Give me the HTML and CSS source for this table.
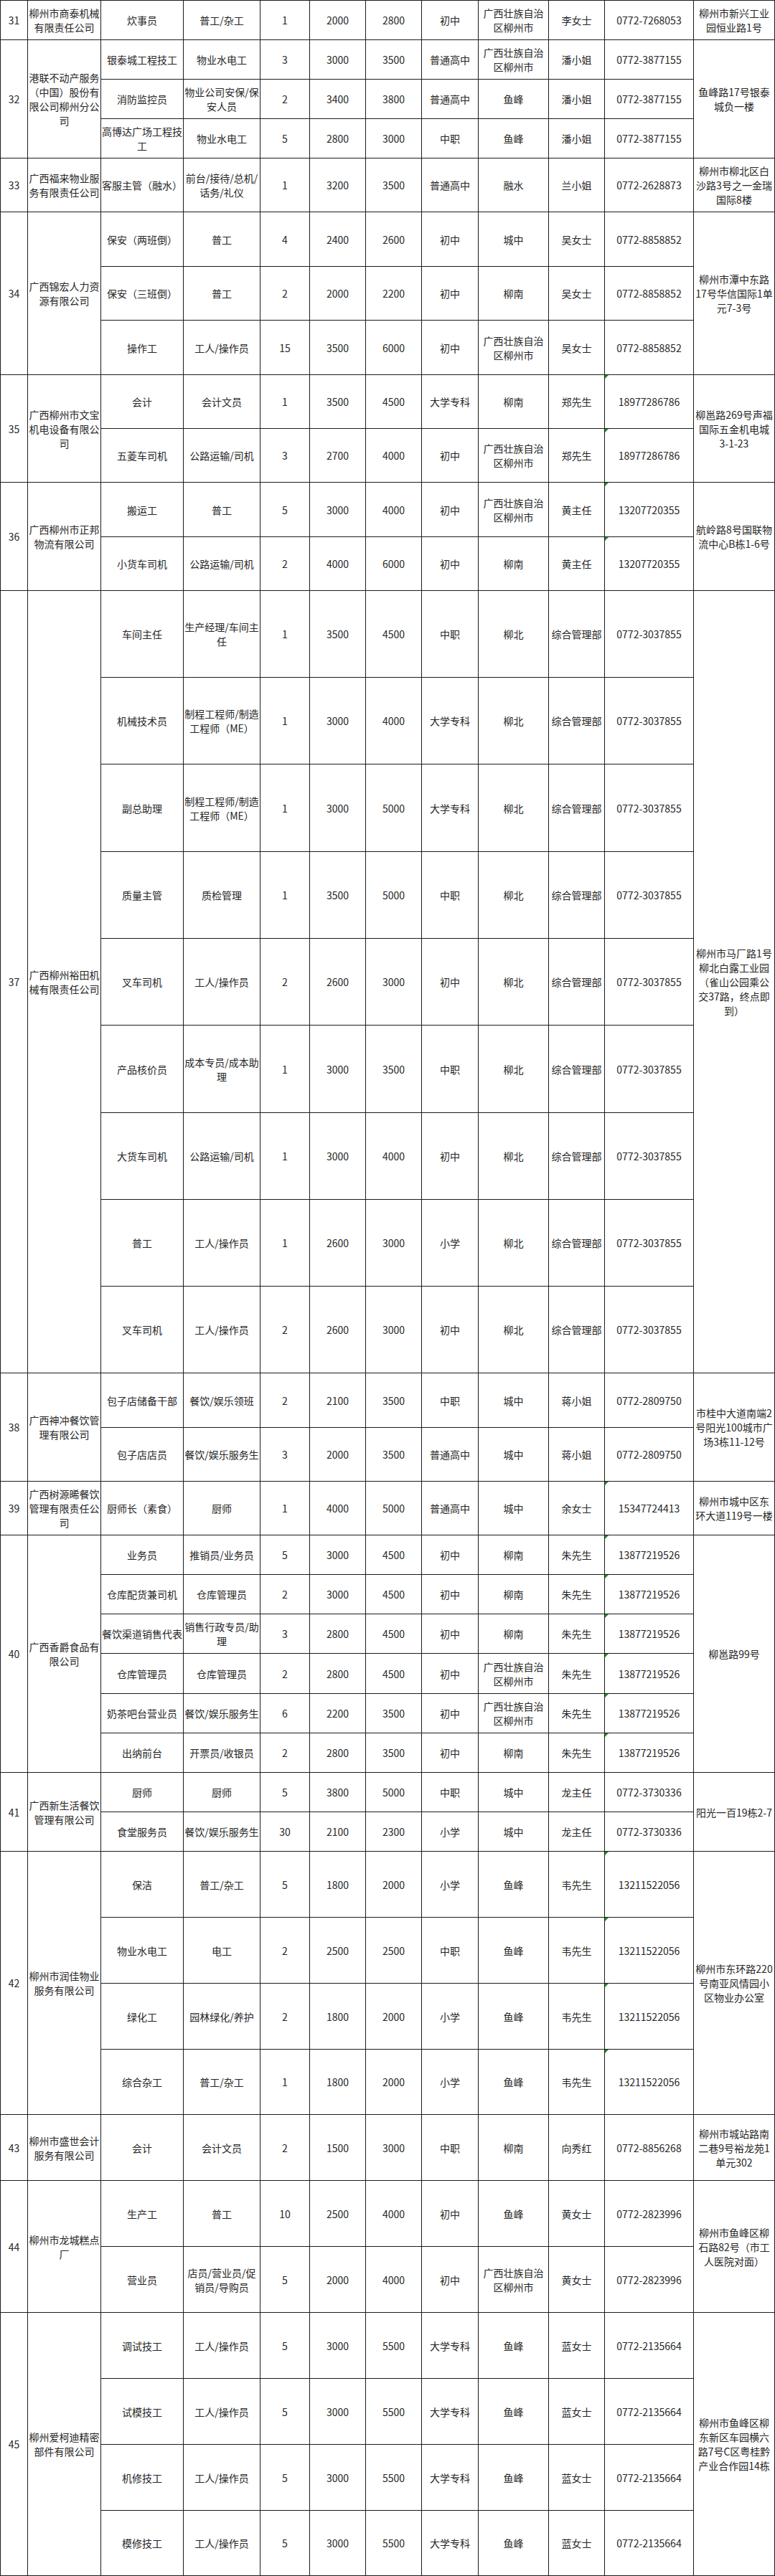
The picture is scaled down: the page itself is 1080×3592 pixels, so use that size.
FILE: index.html
```html
<!DOCTYPE html>
<html lang="zh-CN">
<head>
<meta charset="utf-8">
<title>招聘岗位信息表</title>
<link rel="stylesheet" href="styles.css">
</head>
<body>
<div class="sheet">
<!-- 31 -->
<div class="c">31</div><div class="c"><span>柳州市商泰机械<br>有限责任公司</span></div><div class="c">炊事员</div><div class="c">普工/杂工</div><div class="c">1</div><div class="c">2000</div><div class="c">2800</div><div class="c">初中</div><div class="c"><span>广西壮族自治<br>区柳州市</span></div><div class="c">李女士</div><div class="c">0772-7268053</div><div class="c"><span>柳州市新兴工业<br>园恒业路1号</span></div>
<!-- 32 -->
<div class="c r3">32</div><div class="c r3"><span>港联不动产服务<br>（中国）股份有<br>限公司柳州分公<br>司</span></div><div class="c">银泰城工程技工</div><div class="c">物业水电工</div><div class="c">3</div><div class="c">3000</div><div class="c">3500</div><div class="c">普通高中</div><div class="c"><span>广西壮族自治<br>区柳州市</span></div><div class="c">潘小姐</div><div class="c">0772-3877155</div><div class="c r3"><span>鱼峰路17号银泰<br>城负一楼</span></div>
<div class="c">消防监控员</div><div class="c"><span>物业公司安保/保<br>安人员</span></div><div class="c">2</div><div class="c">3400</div><div class="c">3800</div><div class="c">普通高中</div><div class="c">鱼峰</div><div class="c">潘小姐</div><div class="c">0772-3877155</div>
<div class="c"><span>高博达广场工程技<br>工</span></div><div class="c">物业水电工</div><div class="c">5</div><div class="c">2800</div><div class="c">3000</div><div class="c">中职</div><div class="c">鱼峰</div><div class="c">潘小姐</div><div class="c">0772-3877155</div>
<!-- 33 -->
<div class="c">33</div><div class="c"><span>广西福来物业服<br>务有限责任公司</span></div><div class="c">客服主管（融水）</div><div class="c"><span>前台/接待/总机/<br>话务/礼仪</span></div><div class="c">1</div><div class="c">3200</div><div class="c">3500</div><div class="c">普通高中</div><div class="c">融水</div><div class="c">兰小姐</div><div class="c">0772-2628873</div><div class="c"><span>柳州市柳北区白<br>沙路3号之一金瑞<br>国际8楼</span></div>
<!-- 34 -->
<div class="c r3">34</div><div class="c r3"><span>广西锦宏人力资<br>源有限公司</span></div><div class="c">保安（两班倒）</div><div class="c">普工</div><div class="c">4</div><div class="c">2400</div><div class="c">2600</div><div class="c">初中</div><div class="c">城中</div><div class="c">吴女士</div><div class="c">0772-8858852</div><div class="c r3"><span>柳州市潭中东路<br>17号华信国际1单<br>元7-3号</span></div>
<div class="c">保安（三班倒）</div><div class="c">普工</div><div class="c">2</div><div class="c">2000</div><div class="c">2200</div><div class="c">初中</div><div class="c">柳南</div><div class="c">吴女士</div><div class="c">0772-8858852</div>
<div class="c">操作工</div><div class="c">工人/操作员</div><div class="c">15</div><div class="c">3500</div><div class="c">6000</div><div class="c">初中</div><div class="c"><span>广西壮族自治<br>区柳州市</span></div><div class="c">吴女士</div><div class="c">0772-8858852</div>
<!-- 35 -->
<div class="c r2">35</div><div class="c r2"><span>广西柳州市文宝<br>机电设备有限公<br>司</span></div><div class="c">会计</div><div class="c">会计文员</div><div class="c">1</div><div class="c">3500</div><div class="c">4500</div><div class="c">大学专科</div><div class="c">柳南</div><div class="c">郑先生</div><div class="c flag">18977286786</div><div class="c r2"><span>柳邕路269号声福<br>国际五金机电城<br>3-1-23</span></div>
<div class="c">五菱车司机</div><div class="c">公路运输/司机</div><div class="c">3</div><div class="c">2700</div><div class="c">4000</div><div class="c">初中</div><div class="c"><span>广西壮族自治<br>区柳州市</span></div><div class="c">郑先生</div><div class="c flag">18977286786</div>
<!-- 36 -->
<div class="c r2">36</div><div class="c r2"><span>广西柳州市正邦<br>物流有限公司</span></div><div class="c">搬运工</div><div class="c">普工</div><div class="c">5</div><div class="c">3000</div><div class="c">4000</div><div class="c">初中</div><div class="c"><span>广西壮族自治<br>区柳州市</span></div><div class="c">黄主任</div><div class="c flag">13207720355</div><div class="c r2"><span>航岭路8号国联物<br>流中心B栋1-6号</span></div>
<div class="c">小货车司机</div><div class="c">公路运输/司机</div><div class="c">2</div><div class="c">4000</div><div class="c">6000</div><div class="c">初中</div><div class="c">柳南</div><div class="c">黄主任</div><div class="c flag">13207720355</div>
<!-- 37 -->
<div class="c r9">37</div><div class="c r9"><span>广西柳州裕田机<br>械有限责任公司</span></div><div class="c">车间主任</div><div class="c"><span>生产经理/车间主<br>任</span></div><div class="c">1</div><div class="c">3500</div><div class="c">4500</div><div class="c">中职</div><div class="c">柳北</div><div class="c">综合管理部</div><div class="c">0772-3037855</div><div class="c r9"><span>柳州市马厂路1号<br>柳北白露工业园<br>（雀山公园乘公<br>交37路，终点即<br>到）</span></div>
<div class="c">机械技术员</div><div class="c"><span>制程工程师/制造<br>工程师（ME）</span></div><div class="c">1</div><div class="c">3000</div><div class="c">4000</div><div class="c">大学专科</div><div class="c">柳北</div><div class="c">综合管理部</div><div class="c">0772-3037855</div>
<div class="c">副总助理</div><div class="c"><span>制程工程师/制造<br>工程师（ME）</span></div><div class="c">1</div><div class="c">3000</div><div class="c">5000</div><div class="c">大学专科</div><div class="c">柳北</div><div class="c">综合管理部</div><div class="c">0772-3037855</div>
<div class="c">质量主管</div><div class="c">质检管理</div><div class="c">1</div><div class="c">3500</div><div class="c">5000</div><div class="c">中职</div><div class="c">柳北</div><div class="c">综合管理部</div><div class="c">0772-3037855</div>
<div class="c">叉车司机</div><div class="c">工人/操作员</div><div class="c">2</div><div class="c">2600</div><div class="c">3000</div><div class="c">初中</div><div class="c">柳北</div><div class="c">综合管理部</div><div class="c">0772-3037855</div>
<div class="c">产品核价员</div><div class="c"><span>成本专员/成本助<br>理</span></div><div class="c">1</div><div class="c">3000</div><div class="c">3500</div><div class="c">中职</div><div class="c">柳北</div><div class="c">综合管理部</div><div class="c">0772-3037855</div>
<div class="c">大货车司机</div><div class="c">公路运输/司机</div><div class="c">1</div><div class="c">3000</div><div class="c">4000</div><div class="c">初中</div><div class="c">柳北</div><div class="c">综合管理部</div><div class="c">0772-3037855</div>
<div class="c">普工</div><div class="c">工人/操作员</div><div class="c">1</div><div class="c">2600</div><div class="c">3000</div><div class="c">小学</div><div class="c">柳北</div><div class="c">综合管理部</div><div class="c">0772-3037855</div>
<div class="c">叉车司机</div><div class="c">工人/操作员</div><div class="c">2</div><div class="c">2600</div><div class="c">3000</div><div class="c">初中</div><div class="c">柳北</div><div class="c">综合管理部</div><div class="c">0772-3037855</div>
<!-- 38 -->
<div class="c r2">38</div><div class="c r2"><span>广西神冲餐饮管<br>理有限公司</span></div><div class="c">包子店储备干部</div><div class="c">餐饮/娱乐领班</div><div class="c">2</div><div class="c">2100</div><div class="c">3500</div><div class="c">中职</div><div class="c">城中</div><div class="c">蒋小姐</div><div class="c">0772-2809750</div><div class="c r2"><span>市桂中大道南端2<br>号阳光100城市广<br>场3栋11-12号</span></div>
<div class="c">包子店店员</div><div class="c">餐饮/娱乐服务生</div><div class="c">3</div><div class="c">2000</div><div class="c">3500</div><div class="c">普通高中</div><div class="c">城中</div><div class="c">蒋小姐</div><div class="c">0772-2809750</div>
<!-- 39 -->
<div class="c">39</div><div class="c"><span>广西树源晞餐饮<br>管理有限责任公<br>司</span></div><div class="c">厨师长（素食）</div><div class="c">厨师</div><div class="c">1</div><div class="c">4000</div><div class="c">5000</div><div class="c">普通高中</div><div class="c">城中</div><div class="c">余女士</div><div class="c flag">15347724413</div><div class="c"><span>柳州市城中区东<br>环大道119号一楼</span></div>
<!-- 40 -->
<div class="c r6">40</div><div class="c r6"><span>广西香爵食品有<br>限公司</span></div><div class="c">业务员</div><div class="c">推销员/业务员</div><div class="c">5</div><div class="c">3000</div><div class="c">4500</div><div class="c">初中</div><div class="c">柳南</div><div class="c">朱先生</div><div class="c flag">13877219526</div><div class="c r6">柳邕路99号</div>
<div class="c">仓库配货兼司机</div><div class="c">仓库管理员</div><div class="c">2</div><div class="c">3000</div><div class="c">4500</div><div class="c">初中</div><div class="c">柳南</div><div class="c">朱先生</div><div class="c flag">13877219526</div>
<div class="c">餐饮渠道销售代表</div><div class="c"><span>销售行政专员/助<br>理</span></div><div class="c">3</div><div class="c">2800</div><div class="c">4500</div><div class="c">初中</div><div class="c">柳南</div><div class="c">朱先生</div><div class="c flag">13877219526</div>
<div class="c">仓库管理员</div><div class="c">仓库管理员</div><div class="c">2</div><div class="c">2800</div><div class="c">4500</div><div class="c">初中</div><div class="c"><span>广西壮族自治<br>区柳州市</span></div><div class="c">朱先生</div><div class="c flag">13877219526</div>
<div class="c">奶茶吧台营业员</div><div class="c">餐饮/娱乐服务生</div><div class="c">6</div><div class="c">2200</div><div class="c">3500</div><div class="c">初中</div><div class="c"><span>广西壮族自治<br>区柳州市</span></div><div class="c">朱先生</div><div class="c flag">13877219526</div>
<div class="c">出纳前台</div><div class="c">开票员/收银员</div><div class="c">2</div><div class="c">2800</div><div class="c">3500</div><div class="c">初中</div><div class="c">柳南</div><div class="c">朱先生</div><div class="c flag">13877219526</div>
<!-- 41 -->
<div class="c r2">41</div><div class="c r2"><span>广西新生活餐饮<br>管理有限公司</span></div><div class="c">厨师</div><div class="c">厨师</div><div class="c">5</div><div class="c">3800</div><div class="c">5000</div><div class="c">中职</div><div class="c">城中</div><div class="c">龙主任</div><div class="c">0772-3730336</div><div class="c r2">阳光一百19栋2-7</div>
<div class="c">食堂服务员</div><div class="c">餐饮/娱乐服务生</div><div class="c">30</div><div class="c">2100</div><div class="c">2300</div><div class="c">小学</div><div class="c">城中</div><div class="c">龙主任</div><div class="c">0772-3730336</div>
<!-- 42 -->
<div class="c r4">42</div><div class="c r4"><span>柳州市润佳物业<br>服务有限公司</span></div><div class="c">保洁</div><div class="c">普工/杂工</div><div class="c">5</div><div class="c">1800</div><div class="c">2000</div><div class="c">小学</div><div class="c">鱼峰</div><div class="c">韦先生</div><div class="c flag">13211522056</div><div class="c r4"><span>柳州市东环路220<br>号南亚风情园小<br>区物业办公室</span></div>
<div class="c">物业水电工</div><div class="c">电工</div><div class="c">2</div><div class="c">2500</div><div class="c">2500</div><div class="c">中职</div><div class="c">鱼峰</div><div class="c">韦先生</div><div class="c flag">13211522056</div>
<div class="c">绿化工</div><div class="c">园林绿化/养护</div><div class="c">2</div><div class="c">1800</div><div class="c">2000</div><div class="c">小学</div><div class="c">鱼峰</div><div class="c">韦先生</div><div class="c flag">13211522056</div>
<div class="c">综合杂工</div><div class="c">普工/杂工</div><div class="c">1</div><div class="c">1800</div><div class="c">2000</div><div class="c">小学</div><div class="c">鱼峰</div><div class="c">韦先生</div><div class="c flag">13211522056</div>
<!-- 43 -->
<div class="c">43</div><div class="c"><span>柳州市盛世会计<br>服务有限公司</span></div><div class="c">会计</div><div class="c">会计文员</div><div class="c">2</div><div class="c">1500</div><div class="c">3000</div><div class="c">中职</div><div class="c">柳南</div><div class="c">向秀红</div><div class="c">0772-8856268</div><div class="c"><span>柳州市城站路南<br>二巷9号裕龙苑1<br>单元302</span></div>
<!-- 44 -->
<div class="c r2">44</div><div class="c r2"><span>柳州市龙城糕点<br>厂</span></div><div class="c">生产工</div><div class="c">普工</div><div class="c">10</div><div class="c">2500</div><div class="c">4000</div><div class="c">初中</div><div class="c">鱼峰</div><div class="c">黄女士</div><div class="c">0772-2823996</div><div class="c r2"><span>柳州市鱼峰区柳<br>石路82号（市工<br>人医院对面）</span></div>
<div class="c">营业员</div><div class="c"><span>店员/营业员/促<br>销员/导购员</span></div><div class="c">5</div><div class="c">2000</div><div class="c">4000</div><div class="c">初中</div><div class="c"><span>广西壮族自治<br>区柳州市</span></div><div class="c">黄女士</div><div class="c">0772-2823996</div>
<!-- 45 -->
<div class="c r4">45</div><div class="c r4"><span>柳州爱柯迪精密<br>部件有限公司</span></div><div class="c">调试技工</div><div class="c">工人/操作员</div><div class="c">5</div><div class="c">3000</div><div class="c">5500</div><div class="c">大学专科</div><div class="c">鱼峰</div><div class="c">蓝女士</div><div class="c">0772-2135664</div><div class="c r4"><span>柳州市鱼峰区柳<br>东新区车园横六<br>路7号C区粤桂黔<br>产业合作园14栋</span></div>
<div class="c">试模技工</div><div class="c">工人/操作员</div><div class="c">5</div><div class="c">3000</div><div class="c">5500</div><div class="c">大学专科</div><div class="c">鱼峰</div><div class="c">蓝女士</div><div class="c">0772-2135664</div>
<div class="c">机修技工</div><div class="c">工人/操作员</div><div class="c">5</div><div class="c">3000</div><div class="c">5500</div><div class="c">大学专科</div><div class="c">鱼峰</div><div class="c">蓝女士</div><div class="c">0772-2135664</div>
<div class="c">模修技工</div><div class="c">工人/操作员</div><div class="c">5</div><div class="c">3000</div><div class="c">5500</div><div class="c">大学专科</div><div class="c">鱼峰</div><div class="c">蓝女士</div><div class="c">0772-2135664</div>
</div>
</body>
</html>
```

FILE: styles.css
```css
* {
  box-sizing: border-box;
}

body {
  margin: 0;
  background: #ffffff;
}

.sheet {
  display: grid;
  width: 1080px;
  padding: 1px;
  gap: 1px;
  background: #1c1c1c;
  grid-template-columns: 37px 101px 114px 106px 68px 77px 77px 78px 97px 77px 123px 112px;
  grid-template-rows:
    54px 54px 54px 54px
    74px 75px 74px 75px 74px 74px 75px 74px
    120px 120px 121px 120px 120px 121px 120px 120px 120px
    75px 74px 74px
    54px 54px 54px 55px 54px 54px 54px 54px
    91px 91px 91px 90px 91px 91px 91px 91px 91px 91px 90px;
  font-family: "Noto Sans CJK SC", "Noto Sans", sans-serif;
  font-size: 14px;
  line-height: 20px;
  color: #262626;
}

.c {
  background: #ffffff;
  display: flex;
  align-items: center;
  justify-content: center;
  text-align: center;
  white-space: nowrap;
  overflow: hidden;
}

.r2 { grid-row: span 2; }
.r3 { grid-row: span 3; }
.r4 { grid-row: span 4; }
.r6 { grid-row: span 6; }
.r9 { grid-row: span 9; }

.flag {
  position: relative;
}

.flag::before {
  content: "";
  position: absolute;
  top: 0;
  left: 0;
  border-top: 5px solid #1f8a2e;
  border-right: 5px solid transparent;
}
```
